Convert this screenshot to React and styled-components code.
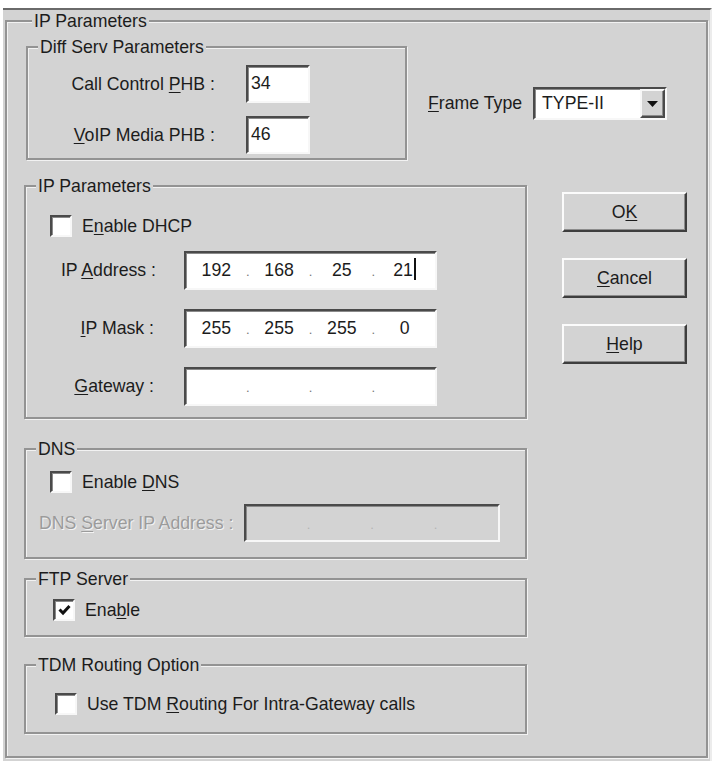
import React from 'react'
import styled, { createGlobalStyle } from 'styled-components'

const GlobalStyle = createGlobalStyle`
  body {
    margin: 0;
    background: #ffffff;
  }
`

const FACE = '#d3d3d3'

const Dialog = styled.div`
  box-sizing: border-box;
  margin: 8px 0 0 3px;
  width: 709px;
  height: 753px;
  padding: 1px 0 0 2px;
  background: ${FACE};
  border-top: 2px solid #6a6a6a;
  border-right: 2px solid #ececec;
  font-family: "Liberation Sans", Arial, sans-serif;
  font-size: 17.7px;
  color: #1c1c1c;
`

const Group = styled.fieldset`
  box-sizing: border-box;
  margin: ${p => p.$mt || 0}px 0 0 ${p => p.$ml || 0}px;
  padding: 0 0 ${p => p.$pb || 0}px ${p => p.$pl || 0}px;
  width: ${p => p.$w}px;
  height: ${p => (p.$h ? `${p.$h}px` : 'auto')};
  min-width: 0;
  border: 2px solid #939393;
  box-shadow: inset 1px 1px 0 #f2f2f2, 1px 1px 0 #f2f2f2;
`

const Legend = styled.legend`
  margin-left: ${p => p.$ml}px;
  padding: 0 2px;
  line-height: 20px;
  background: ${FACE};
`

const Section = styled.div`
  display: flex;
  align-items: flex-start;
  margin-top: ${p => p.$mt || 0}px;
`

const Column = styled.div`
  display: flex;
  flex-direction: column;
  margin: ${p => p.$mt || 0}px 0 0 ${p => p.$ml || 0}px;
`

const Row = styled.div`
  display: flex;
  align-items: center;
  margin: ${p => p.$mt || 0}px 0 0 ${p => p.$ml || 0}px;
`

const Label = styled.span`
  box-sizing: border-box;
  width: ${p => (p.$w ? `${p.$w}px` : 'auto')};
  margin-right: ${p => p.$gap || 0}px;
  text-align: ${p => (p.$left ? 'left' : 'right')};
  white-space: nowrap;
  color: ${p => (p.$disabled ? '#9b9b9b' : 'inherit')};
  text-shadow: ${p => (p.$disabled ? '1px 1px 0 #f4f4f4' : 'none')};
`

const U = styled.span`
  text-decoration: underline;
  text-underline-offset: 2px;
`

const Sunken = styled.div`
  box-sizing: border-box;
  width: ${p => p.$w}px;
  height: ${p => p.$h}px;
  background: ${p => (p.$disabled ? FACE : '#ffffff')};
  border: 2px solid;
  border-color: #4a4a4a #f7f7f7 #f7f7f7 #4a4a4a;
  box-shadow: inset 1px 1px 0 #8a8a8a;
`

const TextBox = styled(Sunken)`
  padding: 5px 0 0 3px;
  line-height: 22px;
`

const IpBox = styled(Sunken)`
  display: grid;
  grid-template-columns: 1fr 6px 1fr 6px 1fr 6px 1fr;
  align-items: center;
  padding: 0 2px 2px 2px;
  color: ${p => (p.$disabled ? '#9b9b9b' : 'inherit')};
`

const Octet = styled.span`
  text-align: center;
  line-height: 30px;
`

const Caret = styled.span`
  display: inline-block;
  width: 2px;
  height: 22px;
  margin-left: 1px;
  vertical-align: -4px;
  background: #111;
`

const Dot = styled.span`
  text-align: center;
  font-size: 13px;
  line-height: 30px;
  padding-top: 4px;
  color: ${p => (p.$disabled ? '#b4b4b4' : '#777777')};
`

const CheckRow = styled.label`
  display: flex;
  align-items: center;
  margin: ${p => p.$mt || 0}px 0 0 ${p => p.$ml || 0}px;
  line-height: 21px;
  white-space: pre;
`

const Box = styled.span`
  box-sizing: border-box;
  display: flex;
  align-items: center;
  justify-content: center;
  width: 22px;
  height: 22px;
  margin-right: 10px;
  background: #ffffff;
  border: 2px solid;
  border-color: #4a4a4a #f7f7f7 #f7f7f7 #4a4a4a;
  box-shadow: inset 1px 1px 0 #8a8a8a;
`

const Combo = styled(Sunken)`
  display: flex;
  align-items: stretch;
  padding: 0;
`

const ComboText = styled.span`
  flex: 1;
  padding-left: 7px;
  line-height: 29px;
`

const ComboButton = styled.span`
  box-sizing: border-box;
  display: flex;
  align-items: center;
  justify-content: center;
  width: 25px;
  background: ${FACE};
  border: 2px solid;
  border-color: #f7f7f7 #4a4a4a #4a4a4a #f7f7f7;
  box-shadow: inset -1px -1px 0 #8a8a8a;
`

const Button = styled.button`
  box-sizing: border-box;
  width: 125px;
  height: 40px;
  margin-bottom: 26px;
  padding: 0;
  background: ${FACE};
  border: 2px solid;
  border-color: #fbfbfb #3e3e3e #3e3e3e #fbfbfb;
  box-shadow: inset -1px -1px 0 #8c8c8c;
  font: inherit;
  color: inherit;
`

const Check = () => (
  <svg width="13" height="12" viewBox="0 0 13 12">
    <path d="M1.5 5.5 L5 9 L11.5 2" fill="none" stroke="#111" strokeWidth="3" />
  </svg>
)

const Arrow = () => (
  <svg width="11" height="6" viewBox="0 0 11 6">
    <path d="M0 0 H11 L5.5 6 Z" fill="#111" />
  </svg>
)

const IpField = ({ values, disabled, caret }) => (
  <IpBox $w={disabled ? 256 : 253} $h={disabled ? 38 : 39} $disabled={disabled}>
    {[0, 1, 2, 3].map(i => (
      <React.Fragment key={i}>
        <Octet>
          {values[i]}
          {caret && i === 3 && <Caret />}
        </Octet>
        {i < 3 && <Dot $disabled={disabled}>.</Dot>}
      </React.Fragment>
    ))}
  </IpBox>
)

const App = () => {
  return (
    <>
      <GlobalStyle />
      <Dialog>
        <Group $w={703} $h={747} $pl={17}>
          <Legend $ml={8}>IP Parameters</Legend>

          <Section>
            <Group $w={381} $mt={6} $ml={2} $pb={4}>
              <Legend $ml={10}>Diff Serv Parameters</Legend>
              <Row $mt={8}>
                <Label $w={187} $gap={31}>Call Control <U>P</U>HB :</Label>
                <TextBox $w={64} $h={38}>34</TextBox>
              </Row>
              <Row $mt={13}>
                <Label $w={187} $gap={31}><U>V</U>oIP Media PHB :</Label>
                <TextBox $w={64} $h={38}>46</TextBox>
              </Row>
            </Group>
            <Row $mt={56} $ml={21}>
              <Label $left $gap={11}><U>F</U>rame Type</Label>
              <Combo $w={134} $h={33}>
                <ComboText>TYPE-II</ComboText>
                <ComboButton><Arrow /></ComboButton>
              </Combo>
            </Row>
          </Section>

          <Section $mt={16}>
            <Column>
              <Group $w={503} $pb={11}>
                <Legend $ml={10}>IP Parameters</Legend>
                <CheckRow $mt={19} $ml={24}>
                  <Box />
                  <span>E<U>n</U>able DHCP</span>
                </CheckRow>
                <Row $mt={14}>
                  <Label $w={130} $gap={28}>IP <U>A</U>ddress :</Label>
                  <IpField values={['192', '168', '25', '21']} caret />
                </Row>
                <Row $mt={19}>
                  <Label $w={128} $gap={30}><U>I</U>P Mask :</Label>
                  <IpField values={['255', '255', '255', '0']} />
                </Row>
                <Row $mt={19}>
                  <Label $w={128} $gap={30}><U>G</U>ateway :</Label>
                  <IpField values={['', '', '', '']} />
                </Row>
              </Group>

              <Group $w={503} $mt={20} $pb={15}>
                <Legend $ml={10}>DNS</Legend>
                <CheckRow $mt={12} $ml={24}>
                  <Box />
                  <span>Enable <U>D</U>NS</span>
                </CheckRow>
                <Row $mt={11} $ml={13}>
                  <Label $w={205} $left $disabled>DNS <U>S</U>erver IP Address :</Label>
                  <IpField values={['', '', '', '']} disabled />
                </Row>
              </Group>

              <Group $w={503} $mt={10} $pb={14}>
                <Legend $ml={10}>FTP Server</Legend>
                <CheckRow $mt={10} $ml={27}>
                  <Box><Check /></Box>
                  <span>Ena<U>b</U>le</span>
                </CheckRow>
              </Group>

              <Group $w={503} $mt={18} $pb={17}>
                <Legend $ml={10}>TDM Routing Option</Legend>
                <CheckRow $mt={18} $ml={29}>
                  <Box />
                  <span>Use TDM <U>R</U>outing For Intra-Gateway calls</span>
                </CheckRow>
              </Group>
            </Column>

            <Column $ml={35} $mt={16}>
              <Button>O<U>K</U></Button>
              <Button><U>C</U>ancel</Button>
              <Button><U>H</U>elp</Button>
            </Column>
          </Section>
        </Group>
      </Dialog>
    </>
  )
}

export default App
